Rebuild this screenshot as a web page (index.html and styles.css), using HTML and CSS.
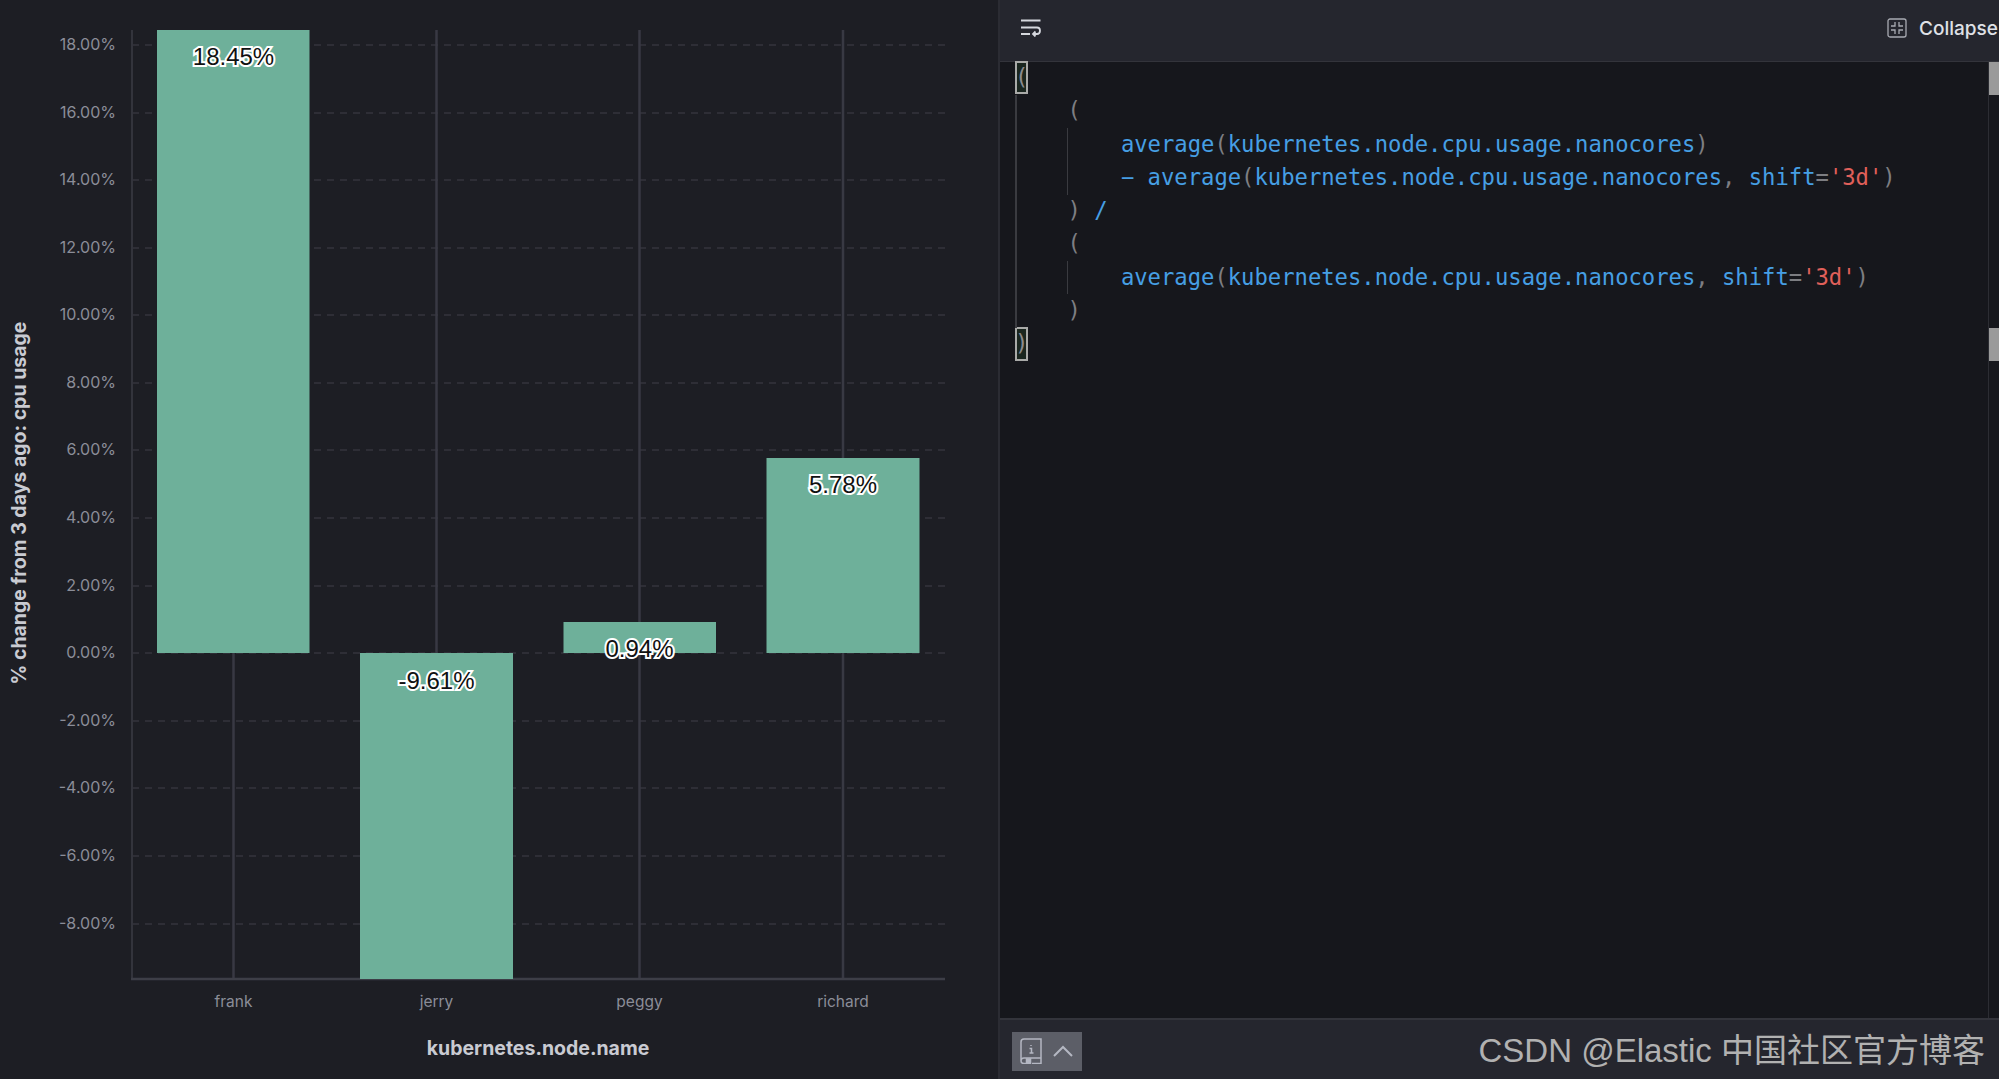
FILE: index.html
```html
<!DOCTYPE html>
<html lang="en">
<head>
    <meta charset="UTF-8">
    <title>Formula chart</title>
    <link rel="stylesheet" href="styles.css">
</head>
<body>
    <div class="layout">
        <div class="chart-pane">
            <svg class="chart" width="998" height="1079" viewBox="0 0 998 1079">
                <!-- horizontal grid -->
                <g class="grid-h">
                    <line x1="132" x2="945" y1="45" y2="45"/>
                    <line x1="132" x2="945" y1="113" y2="113"/>
                    <line x1="132" x2="945" y1="180" y2="180"/>
                    <line x1="132" x2="945" y1="248" y2="248"/>
                    <line x1="132" x2="945" y1="315" y2="315"/>
                    <line x1="132" x2="945" y1="383" y2="383"/>
                    <line x1="132" x2="945" y1="450" y2="450"/>
                    <line x1="132" x2="945" y1="518" y2="518"/>
                    <line x1="132" x2="945" y1="586" y2="586"/>
                    <line x1="132" x2="945" y1="653" y2="653"/>
                    <line x1="132" x2="945" y1="721" y2="721"/>
                    <line x1="132" x2="945" y1="788" y2="788"/>
                    <line x1="132" x2="945" y1="856" y2="856"/>
                    <line x1="132" x2="945" y1="924" y2="924"/>
                </g>
                <!-- vertical grid -->
                <g class="grid-v">
                    <line x1="233.5" x2="233.5" y1="30" y2="979"/>
                    <line x1="436.5" x2="436.5" y1="30" y2="979"/>
                    <line x1="639.5" x2="639.5" y1="30" y2="979"/>
                    <line x1="843" x2="843" y1="30" y2="979"/>
                </g>
                <line class="axis-left" x1="132" x2="132" y1="30" y2="979"/>
                <line class="axis-bottom" x1="131" x2="945" y1="979" y2="979"/>

                <g class="bars">
                    <rect x="157" y="30" width="152.5" height="623"/>
                    <rect x="360" y="653" width="153" height="326"/>
                    <rect x="563.5" y="622" width="152.5" height="31"/>
                    <rect x="766.5" y="458" width="153" height="195"/>
                </g>

                <g class="tick-y">
                    <text x="116" y="44">18.00%</text>
                    <text x="116" y="112">16.00%</text>
                    <text x="116" y="179">14.00%</text>
                    <text x="116" y="247">12.00%</text>
                    <text x="116" y="314">10.00%</text>
                    <text x="116" y="382">8.00%</text>
                    <text x="116" y="449">6.00%</text>
                    <text x="116" y="517">4.00%</text>
                    <text x="116" y="585">2.00%</text>
                    <text x="116" y="652">0.00%</text>
                    <text x="116" y="720">-2.00%</text>
                    <text x="116" y="787">-4.00%</text>
                    <text x="116" y="855">-6.00%</text>
                    <text x="116" y="923">-8.00%</text>
                </g>
                <g class="tick-x">
                    <text x="233.5" y="1001">frank</text>
                    <text x="436.5" y="1001">jerry</text>
                    <text x="639.5" y="1001">peggy</text>
                    <text x="843" y="1001">richard</text>
                </g>

                <g class="bar-value">
                    <text x="233.5" y="56">18.45%</text>
                    <text x="436.5" y="680">-9.61%</text>
                    <text x="639.5" y="648">0.94%</text>
                    <text x="843" y="484">5.78%</text>
                </g>

                <text class="axis-title" x="538" y="1048">kubernetes.node.name</text>
                <text class="axis-title" transform="translate(19 503) rotate(-90)">% change from 3 days ago: cpu usage</text>
            </svg>
        </div>

        <div class="editor-pane">
            <div class="editor-top">
                <svg class="wrap-icon" width="20" height="18" viewBox="0 0 20 18">
                    <path d="M0 1.500h19.500M0 8.500h16c4 0 4 6.500 0 6.500h-4M14.500 12.500 12 15l2.500 2.500M0 15h9"/>
                </svg>
                <div class="collapse">
                    <svg class="collapse-icon" width="20" height="20" viewBox="0 0 20 20">
                        <rect x="1" y="1" width="18" height="18" rx="2"/>
                        <path d="M8 4v4H4M12 4v4h4M8 16v-4H4M12 16v-4h4"/>
                    </svg>
                    <span>Collapse</span>
                </div>
            </div>

            <div class="editor-body">
                <div class="code">
                    <span class="guide guide-outer"></span>
                    <span class="guide guide-a"></span>
                    <span class="guide guide-b"></span>
<pre><span class="match">(</span>
    <span class="p">(</span>
        <span class="fn">average</span><span class="p">(</span><span class="fn">kubernetes.node.cpu.usage.nanocores</span><span class="p">)</span>
        <span class="fn">− average</span><span class="p">(</span><span class="fn">kubernetes.node.cpu.usage.nanocores</span><span class="p">,</span> <span class="fn">shift</span><span class="p">=</span><span class="str">'3d'</span><span class="p">)</span>
    <span class="p">)</span> <span class="fn">/</span>
    <span class="p">(</span>
        <span class="fn">average</span><span class="p">(</span><span class="fn">kubernetes.node.cpu.usage.nanocores</span><span class="p">,</span> <span class="fn">shift</span><span class="p">=</span><span class="str">'3d'</span><span class="p">)</span>
    <span class="p">)</span>
<span class="match">)</span></pre>
                </div>
                <div class="scroll-track">
                    <span class="scroll-mark"></span>
                    <span class="scroll-mark mark-end"></span>
                </div>
            </div>

            <div class="editor-bottom">
                <div class="help-btn">
                    <svg class="book-icon" width="22" height="26" viewBox="0 0 22 26">
                        <path d="M4 1h17v19H4C2 20 1 21 1 23V4c0-2 1-3 3-3zM1 23c0 1.500 1 2.500 3 2.500h3M12 25.500h9V20"/>
                        <path class="book-mark" d="M6.500 21h4v5h-4z"/>
                        <path d="M11 7v1M9.500 10.500H11.500V15M9.500 15h4"/>
                    </svg>
                    <svg class="chevron" width="20" height="12" viewBox="0 0 20 12">
                        <path d="M1 11 10 2l9 9"/>
                    </svg>
                </div>
                <span class="watermark">CSDN @Elastic 中国社区官方博客</span>
            </div>
        </div>
    </div>
</body>
</html>
```

FILE: styles.css
```css
html, body {
    margin: 0;
    padding: 0;
    height: 100%;
    overflow: hidden;
    background: #1d1e24;
}

.layout {
    display: flex;
    width: 1999px;
    height: 1079px;
}

.chart-pane {
    width: 998px;
    flex-shrink: 0;
    background: #1d1e24;
}

.chart {
    display: block;
}

.chart text {
    font-family: Inter, "Liberation Sans", sans-serif;
}

.grid-h line {
    stroke: #34353c;
    stroke-width: 1.500;
    stroke-dasharray: 7 6;
}

.grid-v line {
    stroke: #383943;
    stroke-width: 2.500;
}

.axis-left {
    stroke: #33343c;
    stroke-width: 2;
}

.axis-bottom {
    stroke: #3d3e47;
    stroke-width: 2.500;
}

.bars rect {
    fill: #6eb09a;
}

.tick-y text {
    font-size: 16px;
    fill: #8b8d98;
    text-anchor: end;
    dominant-baseline: central;
}

.tick-x text {
    font-size: 15.500px;
    fill: #8b8d98;
    text-anchor: middle;
    dominant-baseline: central;
}

.chart .bar-value text {
    font-family: "Liberation Sans", Arial, sans-serif;
    font-size: 24px;
    fill: #111;
    stroke: #fff;
    stroke-width: 4px;
    paint-order: stroke;
    text-anchor: middle;
    dominant-baseline: central;
}

.axis-title {
    font-size: 19.500px;
    font-weight: 700;
    fill: #c9cbd2;
    text-anchor: middle;
    dominant-baseline: central;
}

.editor-pane {
    flex: 1;
    min-width: 0;
    display: flex;
    flex-direction: column;
    border-left: 2px solid #2b2c33;
}

.editor-top {
    flex-shrink: 0;
    display: flex;
    align-items: center;
    justify-content: space-between;
    padding-left: 21px;
    padding-bottom: 5px;
    height: 56px;
    background: #25262e;
    border-bottom: 1px solid #33343b;
}

.wrap-icon path {
    fill: none;
    stroke: #d5d7dd;
    stroke-width: 1.800;
}

.collapse {
    display: flex;
    align-items: center;
    gap: 12px;
    width: 112px;
    flex-shrink: 0;
    white-space: nowrap;
    font-family: Inter, "Liberation Sans", sans-serif;
    font-size: 19px;
    font-weight: 500;
    color: #dfe0e6;
}

.collapse-icon {
    flex-shrink: 0;
}

.collapse-icon rect,
.collapse-icon path {
    fill: none;
    stroke: #a8aab2;
    stroke-width: 1.300;
}

.editor-body {
    flex: 1;
    min-height: 0;
    display: flex;
    background: #16171c;
    border-bottom: 2px solid #33343b;
}

.code {
    flex: 1;
    position: relative;
    padding-left: 14px;
}

.code pre {
    margin: -1px 0 0;
    font-family: "DejaVu Sans Mono", "Liberation Mono", monospace;
    font-size: 22.200px;
    line-height: 33.300px;
    color: #8a8b8f;
}

.fn {
    color: #469fe4;
}

.p {
    color: #7d7e82;
}

.str {
    color: #e0605a;
}

.match {
    display: inline-block;
    height: 33.300px;
    vertical-align: top;
    margin-left: 1px;
    margin-right: -1px;
    color: #8a8b8f;
    background: #1a261f;
    outline: 2px solid #a9aaa8;
    outline-offset: -2px;
}

.guide {
    position: absolute;
    width: 1px;
    background: #3a3b40;
}

.guide-outer {
    left: 15px;
    top: 33px;
    height: 233px;
    width: 2px;
}

.guide-a {
    left: 67px;
    top: 66px;
    height: 67px;
}

.guide-b {
    left: 67px;
    top: 199px;
    height: 33px;
}

.scroll-track {
    width: 10px;
    flex-shrink: 0;
    display: flex;
    flex-direction: column;
    background: #16171c;
    border-left: 1px solid #2c2d33;
}

.scroll-mark {
    display: block;
    height: 33px;
    background: #9a9a9a;
}

.mark-end {
    margin-top: 233px;
}

.editor-bottom {
    height: 59px;
    flex-shrink: 0;
    display: flex;
    align-items: center;
    justify-content: space-between;
    padding: 0 14px 0 12px;
    background: #25262e;
}

.help-btn {
    display: flex;
    align-items: center;
    gap: 11px;
    width: 70px;
    height: 39px;
    box-sizing: border-box;
    padding-left: 8px;
    margin-top: 3px;
    background: #5c5e67;
}

.book-icon path {
    fill: none;
    stroke: #b4b7c2;
    stroke-width: 1.500;
}

.book-icon .book-mark {
    fill: #b4b7c2;
}

.chevron path {
    fill: none;
    stroke: #b4b7c2;
    stroke-width: 2;
}

.watermark {
    font-family: "Liberation Sans", "Noto Sans CJK SC", sans-serif;
    font-size: 33px;
    color: #b1b1b1;
    white-space: nowrap;
    margin-top: -4px;
}
```
